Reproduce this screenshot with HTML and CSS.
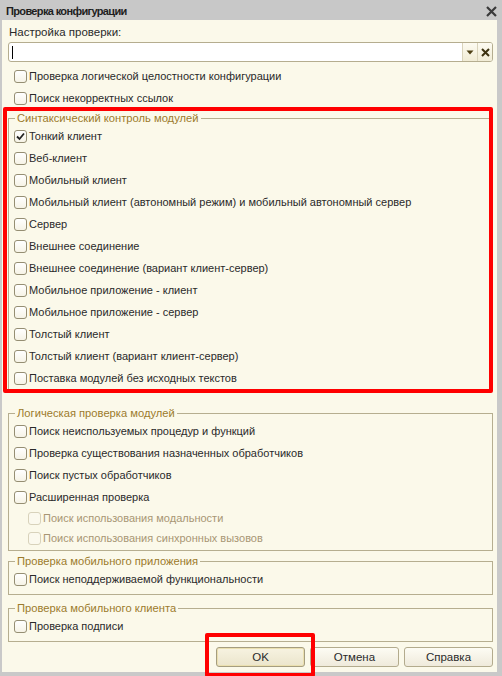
FILE: index.html
```html
<!DOCTYPE html>
<html lang="ru">
<head>
<meta charset="utf-8">
<title>Проверка конфигурации</title>
<link rel="stylesheet" href="styles.css">
</head>
<body>
<div class="window">
  <div class="titlebar">
    <span class="title">Проверка конфигурации</span>
    <svg class="close" width="11" height="11" viewBox="0 0 11 11"><path d="M1 1 L10 10 M10 1 L1 10" stroke="#3a3a3a" stroke-width="2.2" fill="none"/></svg>
  </div>
  <div class="content">
    <div class="field-label">Настройка проверки:</div>
    <div class="combo">
      <div class="combo-input"><span class="caret"></span></div>
      <div class="combo-btn"><svg width="8" height="5" viewBox="0 0 8 5"><path d="M0.5 0.5 L7.5 0.5 L4 4.5 Z" fill="#4d3f14"/></svg></div>
      <div class="combo-btn"><svg width="9" height="9" viewBox="0 0 9 9"><path d="M1 1 L8 8 M8 1 L1 8" stroke="#3d3210" stroke-width="2" fill="none"/></svg></div>
    </div>

    <div class="rows top-rows">
      <div class="cb"><span class="box"></span><span class="txt">Проверка логической целостности конфигурации</span></div>
      <div class="cb"><span class="box"></span><span class="txt">Поиск некорректных ссылок</span></div>
    </div>

    <fieldset class="group g1">
      <legend>Синтаксический контроль модулей</legend>
      <div class="cb"><span class="box checked"><svg width="11" height="11" viewBox="0 0 11 11"><path d="M2 5.5 L4.5 8 L9 2.5" stroke="#222" stroke-width="1.8" fill="none"/></svg></span><span class="txt">Тонкий клиент</span></div>
      <div class="cb"><span class="box"></span><span class="txt">Веб-клиент</span></div>
      <div class="cb"><span class="box"></span><span class="txt">Мобильный клиент</span></div>
      <div class="cb"><span class="box"></span><span class="txt">Мобильный клиент (автономный режим) и мобильный автономный сервер</span></div>
      <div class="cb"><span class="box"></span><span class="txt">Сервер</span></div>
      <div class="cb"><span class="box"></span><span class="txt">Внешнее соединение</span></div>
      <div class="cb"><span class="box"></span><span class="txt">Внешнее соединение (вариант клиент-сервер)</span></div>
      <div class="cb"><span class="box"></span><span class="txt">Мобильное приложение - клиент</span></div>
      <div class="cb"><span class="box"></span><span class="txt">Мобильное приложение - сервер</span></div>
      <div class="cb"><span class="box"></span><span class="txt">Толстый клиент</span></div>
      <div class="cb"><span class="box"></span><span class="txt">Толстый клиент (вариант клиент-сервер)</span></div>
      <div class="cb"><span class="box"></span><span class="txt">Поставка модулей без исходных текстов</span></div>
    </fieldset>

    <fieldset class="group g2">
      <legend>Логическая проверка модулей</legend>
      <div class="cb"><span class="box"></span><span class="txt">Поиск неиспользуемых процедур и функций</span></div>
      <div class="cb"><span class="box"></span><span class="txt">Проверка существования назначенных обработчиков</span></div>
      <div class="cb"><span class="box"></span><span class="txt">Поиск пустых обработчиков</span></div>
      <div class="cb"><span class="box"></span><span class="txt">Расширенная проверка</span></div>
      <div class="cb sub disabled"><span class="box"></span><span class="txt">Поиск использования модальности</span></div>
      <div class="cb sub disabled"><span class="box"></span><span class="txt">Поиск использования синхронных вызовов</span></div>
    </fieldset>

    <fieldset class="group g3">
      <legend>Проверка мобильного приложения</legend>
      <div class="cb"><span class="box"></span><span class="txt">Поиск неподдерживаемой функциональности</span></div>
    </fieldset>

    <fieldset class="group g4">
      <legend>Проверка мобильного клиента</legend>
      <div class="cb"><span class="box"></span><span class="txt">Проверка подписи</span></div>
    </fieldset>

    <div class="buttons">
      <button class="btn default">OK</button>
      <button class="btn">Отмена</button>
      <button class="btn">Справка</button>
    </div>
  </div>
  <div class="annot annot-group"></div>
  <div class="annot annot-ok"></div>
</div>
</body>
</html>
```

FILE: styles.css
```css
* { box-sizing: border-box; }
html, body { margin: 0; padding: 0; }
body {
  font-family: "Liberation Sans", Arial, sans-serif;
  font-size: 11px;
  color: #2a2a2a;
  background: #c9c9c9;
}
.window {
  position: relative;
  width: 502px;
  height: 676px;
  background: #c9c9c9;
  display: flex;
  flex-direction: column;
  padding: 0 5px 4px 2px;
  overflow: hidden;
}
.titlebar {
  height: 20px;
  flex: none;
  margin: 0 -5px 0 -2px;
  padding: 0 5px 0 6px;
  display: flex;
  align-items: center;
  justify-content: space-between;
  background: #c8c8c8;
}
.title {
  font-weight: bold;
  font-size: 11px;
  letter-spacing: -0.65px;
  color: #1e1e1e;
  margin-top: 1px;
}
.close { display: block; margin-top: 2px; }
.content {
  flex: 1;
  background: #fbf9ea;
  padding: 5px 4px 0 6px;
  display: flex;
  flex-direction: column;
}
.field-label {
  height: 15px;
  line-height: 15px;
  padding-left: 1px;
  font-size: 11.5px;
  color: #2a2a2a;
}
.combo {
  margin-top: 2px;
  height: 20px;
  display: flex;
  border: 1px solid #b5ad8f;
  border-radius: 3px;
  background: #fff;
  overflow: hidden;
}
.combo-input {
  flex: 1;
  display: flex;
  align-items: center;
  padding-left: 3px;
}
.caret {
  width: 1px;
  height: 13px;
  background: #000;
}
.combo-btn {
  width: 15px;
  border-left: 1px solid #d9d3bb;
  background: linear-gradient(#fdfbf1, #f1ecd6);
  display: flex;
  align-items: center;
  justify-content: center;
}
.rows.top-rows { margin-top: 3px; }
.cb {
  height: 22px;
  display: flex;
  align-items: center;
  padding-left: 6px;
  white-space: nowrap;
}
.txt { margin-top: -1px; }
.box {
  width: 13px;
  height: 13px;
  flex: none;
  border: 1px solid #958e73;
  border-radius: 3px;
  background: linear-gradient(#ffffff, #f6f3e6);
  margin-right: 2px;
  display: flex;
  align-items: center;
  justify-content: center;
}
.group {
  margin: 0;
  padding: 0;
  border: 1px solid #b6ae90;
  min-width: 0;
}
.group legend {
  margin-left: 6px;
  padding: 0 2px;
  height: 14px;
  line-height: 14px;
  font-size: 11.2px;
  color: #9c7b2c;
}
.group .cb { padding-left: 5px; }
.g1 { margin-top: 2px; }
.g2 { margin-top: 16px; padding-bottom: 2px; }
.g3 { margin-top: 3px; padding-bottom: 4px; }
.g4 { margin-top: 6px; padding-bottom: 4px; }
.group .cb.sub { height: 20px; padding-left: 19px; }
.group .cb.sub:first-of-type { margin-top: 1px; }
.cb.disabled .box { border-color: #d8d2bb; background: #fbf9ee; }
.cb.disabled .txt { color: #a89674; }
.buttons {
  margin-top: 5px;
  display: flex;
  justify-content: flex-end;
  gap: 5px;
}
.btn {
  width: 89px;
  height: 20px;
  padding: 0;
  font-family: "Liberation Sans", Arial, sans-serif;
  font-size: 11.5px;
  color: #2a2a2a;
  border: 1px solid #b3ab8d;
  border-radius: 3px;
  background: linear-gradient(#fdfcf4, #efeadb);
}
.btn.default {
  border-color: #a59d7f;
  box-shadow: inset 0 0 0 1px #ebe0b0;
  background: linear-gradient(#f7f3e1, #ebe5cc);
}
.annot {
  position: absolute;
  border: 4px solid #ff0000;
  border-radius: 2px;
  pointer-events: none;
}
.annot-group { left: 3px; top: 107px; width: 490px; height: 286px; }
.annot-ok { left: 205px; top: 633px; width: 110px; height: 44px; }
```
